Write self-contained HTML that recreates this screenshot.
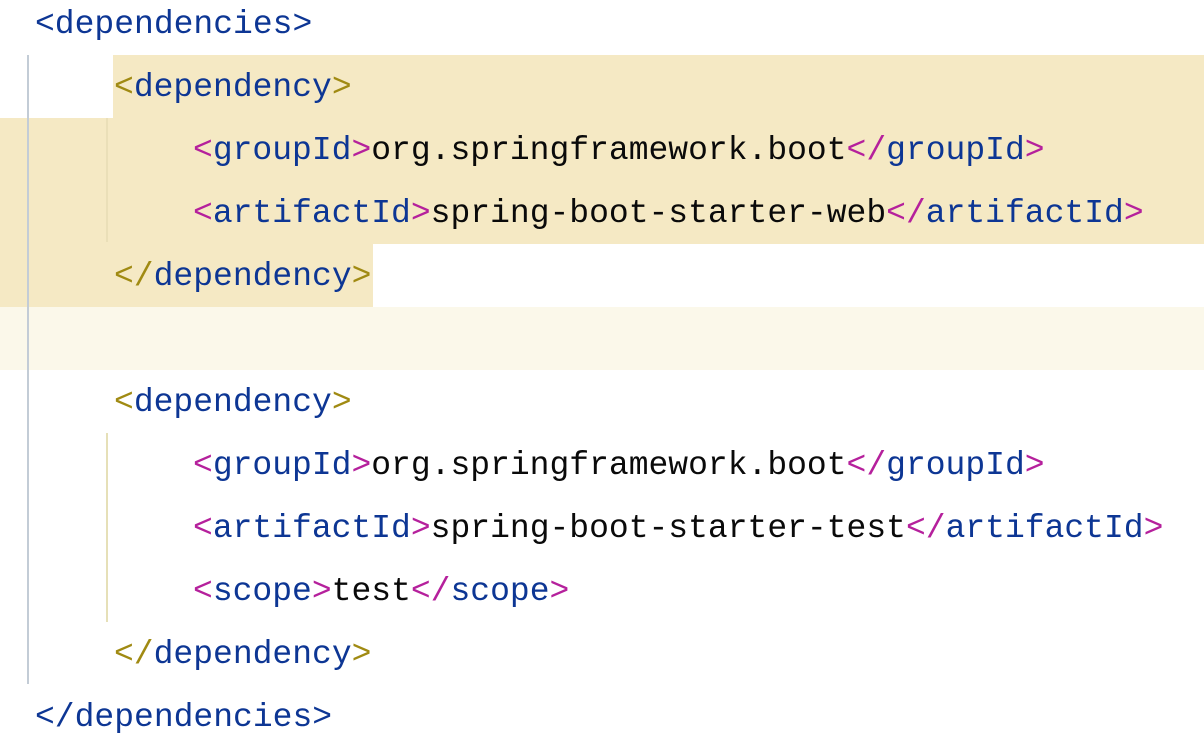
<!DOCTYPE html>
<html><head><meta charset="utf-8"><style>
html,body{margin:0;padding:0;background:#fff;}
body{width:1204px;height:744px;position:relative;overflow:hidden;font-family:"Liberation Mono",monospace;font-size:33px;}
.band{position:absolute;background:#f5e9c4;}
.l{position:absolute;left:0;height:63px;line-height:63px;white-space:pre;color:#0a0a0a;}
.b{color:#0d3694}
.o{color:#a08a12}
.m{color:#b5209c}
.g{position:absolute;width:2px;}
</style></head><body>
<div class="band" style="left:113px;top:55px;width:1091px;height:64px"></div>
<div class="band" style="left:0;top:118px;width:1204px;height:126px"></div>
<div class="band" style="left:0;top:243px;width:373px;height:64px"></div>
<div class="band" style="left:0;top:307px;width:1204px;height:63px;background:#fbf8ea"></div>
<div class="g" style="left:27px;top:55px;height:629px;background:#c3ccd6"></div>
<div class="g" style="left:106px;top:118px;height:124px;background:#eadfb8"></div>
<div class="g" style="left:106px;top:433px;height:189px;background:#e6e0b8"></div>

<div class="l" style="top:-7px;left:35px"><span class="b">&lt;dependencies&gt;</span></div>
<div class="l" style="top:56px;left:114px"><span class="o">&lt;</span><span class="b">dependency</span><span class="o">&gt;</span></div>
<div class="l" style="top:119px;left:193px"><span class="m">&lt;</span><span class="b">groupId</span><span class="m">&gt;</span>org.springframework.boot<span class="m">&lt;/</span><span class="b">groupId</span><span class="m">&gt;</span></div>
<div class="l" style="top:182px;left:193px"><span class="m">&lt;</span><span class="b">artifactId</span><span class="m">&gt;</span>spring-boot-starter-web<span class="m">&lt;/</span><span class="b">artifactId</span><span class="m">&gt;</span></div>
<div class="l" style="top:245px;left:114px"><span class="o">&lt;/</span><span class="b">dependency</span><span class="o">&gt;</span></div>
<div class="l" style="top:371px;left:114px"><span class="o">&lt;</span><span class="b">dependency</span><span class="o">&gt;</span></div>
<div class="l" style="top:434px;left:193px"><span class="m">&lt;</span><span class="b">groupId</span><span class="m">&gt;</span>org.springframework.boot<span class="m">&lt;/</span><span class="b">groupId</span><span class="m">&gt;</span></div>
<div class="l" style="top:497px;left:193px"><span class="m">&lt;</span><span class="b">artifactId</span><span class="m">&gt;</span>spring-boot-starter-test<span class="m">&lt;/</span><span class="b">artifactId</span><span class="m">&gt;</span></div>
<div class="l" style="top:560px;left:193px"><span class="m">&lt;</span><span class="b">scope</span><span class="m">&gt;</span>test<span class="m">&lt;/</span><span class="b">scope</span><span class="m">&gt;</span></div>
<div class="l" style="top:623px;left:114px"><span class="o">&lt;/</span><span class="b">dependency</span><span class="o">&gt;</span></div>
<div class="l" style="top:686px;left:35px"><span class="b">&lt;/dependencies&gt;</span></div>
</body></html>
